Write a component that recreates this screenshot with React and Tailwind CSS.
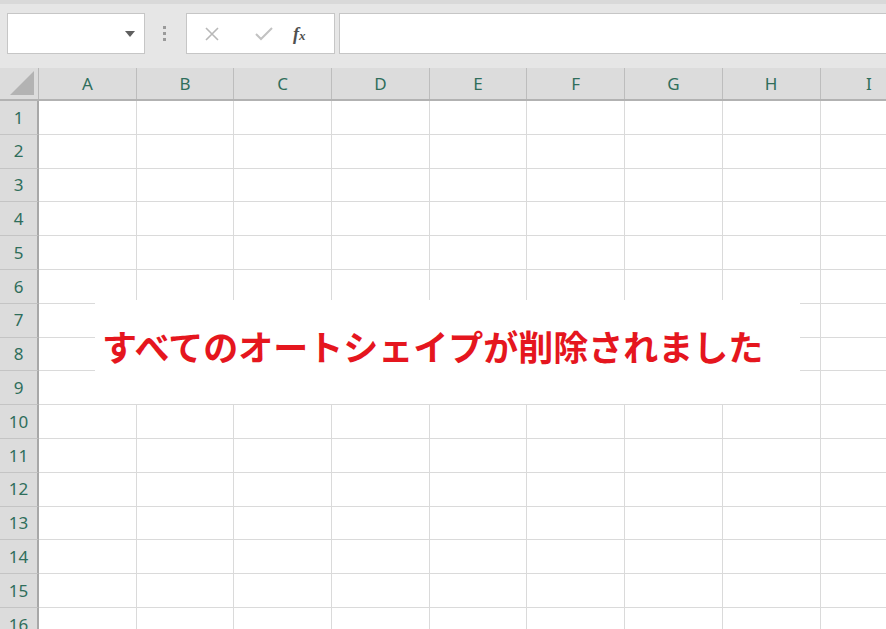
import React from "react";

const cols = ["A", "B", "C", "D", "E", "F", "G", "H", "I"];
const rows = Array.from({ length: 16 }, (_, i) => i + 1);

export default function App() {
  return (
    <div className="relative w-[886px] h-[629px] overflow-hidden bg-white" style={{ fontFamily: '"Noto Sans", "Noto Sans CJK JP", sans-serif' }}>
      {/* toolbar */}
      <div className="h-[68px] bg-[#e6e6e6] border-t-[4px] border-[#d9d9d9] relative">
        <div className="absolute left-[7px] top-[9px] w-[138px] h-[41px] bg-white border border-[#c6c6c6] flex items-center justify-end pr-[9px]">
          <svg width="10" height="6" viewBox="0 0 10 6"><path d="M0 0h10L5 6z" fill="#5f5f5f" /></svg>
        </div>
        <div className="absolute left-[163px] top-[22px] flex flex-col gap-[3px]">
          <span className="w-[3px] h-[3px] bg-[#9a9a9a]" />
          <span className="w-[3px] h-[3px] bg-[#9a9a9a]" />
          <span className="w-[3px] h-[3px] bg-[#9a9a9a]" />
        </div>
        <div className="absolute left-[186px] top-[9px] w-[149px] h-[41px] bg-white border border-[#c6c6c6] flex items-center">
          <svg className="ml-[18px]" width="14" height="14" viewBox="0 0 14 14"><path d="M1 1l12 12M13 1L1 13" stroke="#b8b8b8" strokeWidth="1.6" /></svg>
          <svg className="ml-[36px]" width="18" height="14" viewBox="0 0 18 14"><path d="M1 7l5 5L17 1" stroke="#c2c2c2" strokeWidth="2" fill="none" /></svg>
          <span className="ml-[20px] text-[18px] italic font-bold text-[#505050] leading-none" style={{ fontFamily: '"Liberation Serif", serif' }}>f<span className="text-[13px]">x</span></span>
        </div>
        <div className="absolute left-[339px] top-[9px] right-[-4px] h-[41px] bg-white border border-[#c6c6c6]" />
      </div>

      {/* column header */}
      <div className="flex h-[33px] bg-[#dcdcdc] border-b-[2px] border-[#b2b2b2] text-[17px] text-[#2f6e5b]">
        <div className="w-[39px] shrink-0 border-r border-[#b8b8b8] flex items-end justify-end p-[4px]">
          <svg width="24" height="24" viewBox="0 0 24 24"><path d="M24 0V24H0z" fill="#b3b3b3" /></svg>
        </div>
        {cols.map((c) => (
          <div key={c} className="w-[97.7px] shrink-0 border-r border-[#bdbdbd] flex items-center justify-center">{c}</div>
        ))}
      </div>

      {/* grid rows */}
      {rows.map((r) => (
        <div key={r} className="flex h-[33.8px] border-b border-[#dadada]">
          <div className="w-[39px] shrink-0 bg-[#dcdcdc] border-r-[2px] border-[#a8a8a8] border-b border-b-[#c4c4c4] flex items-center justify-center text-[17px] text-[#2f6e5b] -mb-px">{r}</div>
          {cols.map((c) => (
            <div key={c} className="w-[97.7px] shrink-0 border-r border-[#dadada]" />
          ))}
        </div>
      ))}

      {/* message overlay */}
      <div className="absolute left-[95px] top-[300px] w-[705px] h-[104px] bg-white flex items-center pl-[7px] pb-[14px]">
        <span className="text-[35px] font-bold text-[#e5161e] leading-none" style={{ fontFamily: '"Noto Sans CJK JP", sans-serif' }}>
          すべてのオートシェイプが削除されました
        </span>
      </div>
    </div>
  );
}
